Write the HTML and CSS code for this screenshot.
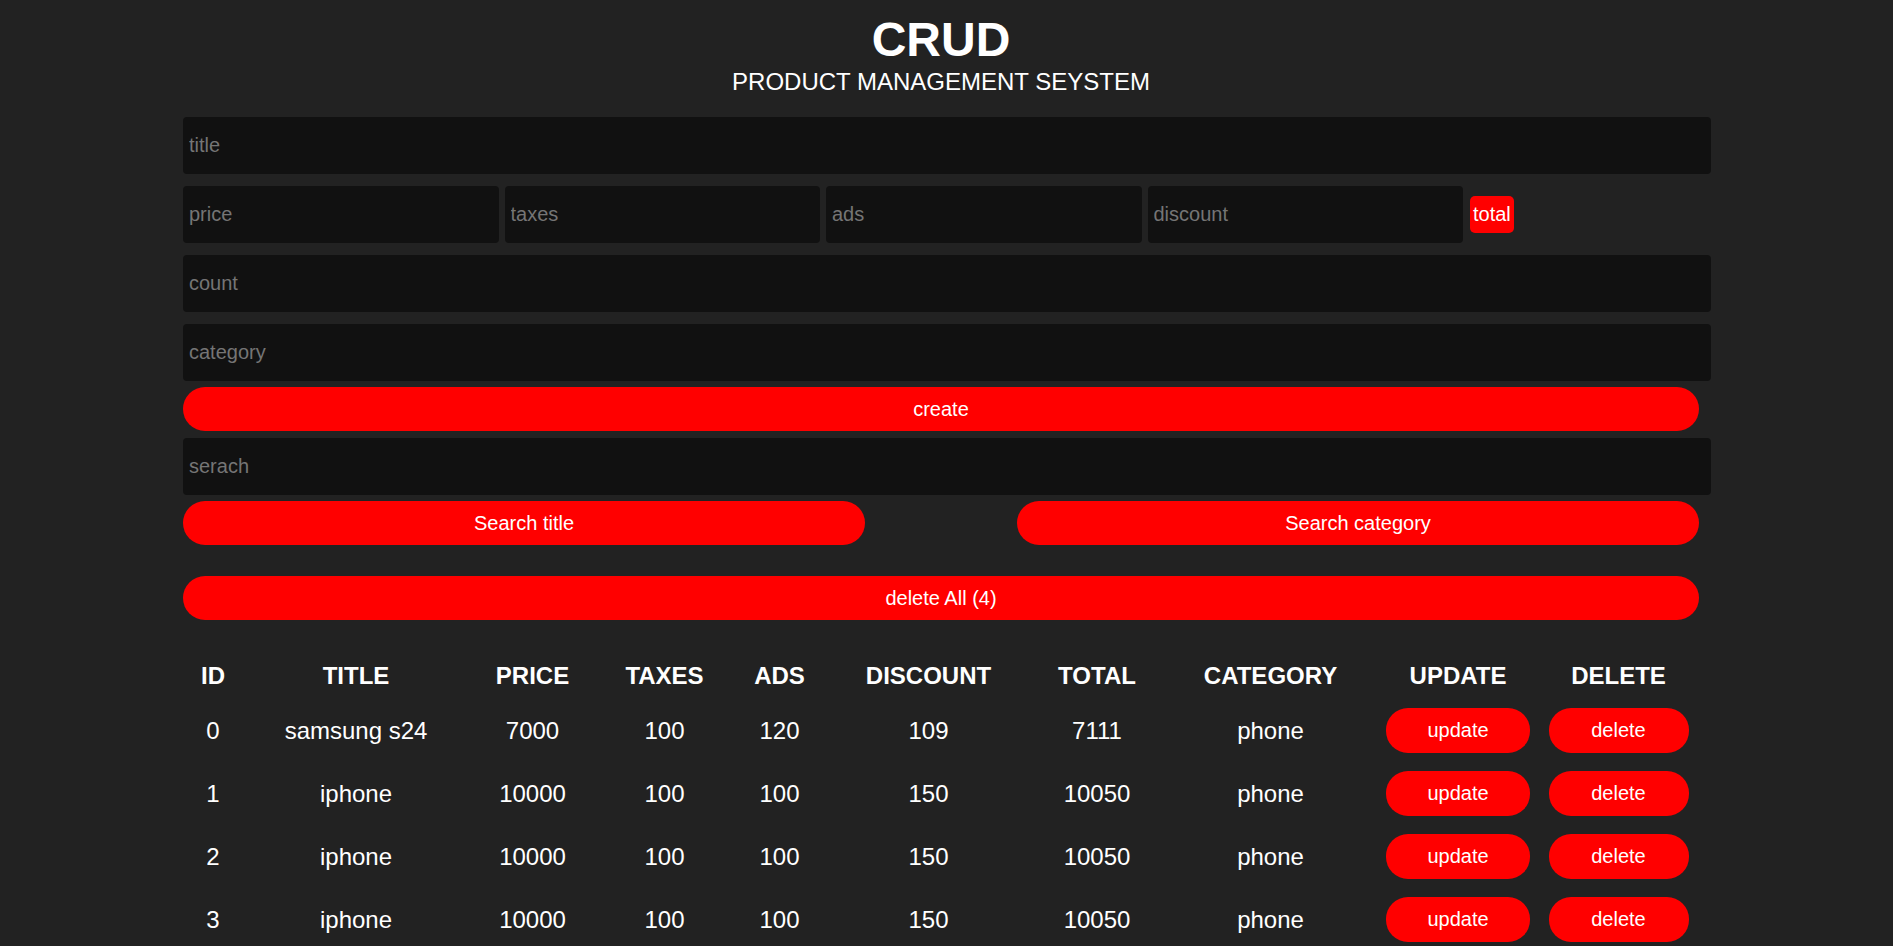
FILE: index.html
```
<!DOCTYPE html>
<html lang="en">
<head>
<meta charset="utf-8">
<title>CRUD</title>
<link rel="stylesheet" href="styles.css">
</head>
<body>
<div class="crud">
  <header class="head">
    <h1 class="head-title">CRUD</h1>
    <p class="head-sub">PRODUCT MANAGEMENT SEYSTEM</p>
  </header>

  <section class="form">
    <input class="field field-block" type="text" placeholder="title">
    <div class="price-row">
      <input class="field field-price" type="number" placeholder="price">
      <input class="field field-price" type="number" placeholder="taxes">
      <input class="field field-price" type="number" placeholder="ads">
      <input class="field field-price" type="number" placeholder="discount">
      <small class="total">total</small>
    </div>
    <input class="field field-block field-gap" type="number" placeholder="count">
    <input class="field field-block field-gap" type="text" placeholder="category">
    <button class="btn btn-create">create</button>
    <input class="field field-block field-search" type="text" placeholder="serach">
    <div class="search-btns">
      <button class="btn btn-half">Search title</button>
      <button class="btn btn-half">Search category</button>
    </div>
    <button class="btn btn-delete-all">delete All (4)</button>
  </section>

  <table class="products">
    <colgroup>
      <col class="c-id"><col class="c-title"><col class="c-price"><col class="c-taxes"><col class="c-ads">
      <col class="c-discount"><col class="c-total"><col class="c-category"><col class="c-update"><col class="c-delete">
    </colgroup>
    <thead>
      <tr>
        <th>id</th><th>title</th><th>price</th><th>taxes</th><th>ads</th>
        <th>discount</th><th>total</th><th>category</th><th>update</th><th>delete</th>
      </tr>
    </thead>
    <tbody>
      <tr>
        <td>0</td><td>samsung s24</td><td>7000</td><td>100</td><td>120</td><td>109</td><td>7111</td><td>phone</td>
        <td><button class="btn btn-row btn-update">update</button></td>
        <td><button class="btn btn-row btn-del">delete</button></td>
      </tr>
      <tr>
        <td>1</td><td>iphone</td><td>10000</td><td>100</td><td>100</td><td>150</td><td>10050</td><td>phone</td>
        <td><button class="btn btn-row btn-update">update</button></td>
        <td><button class="btn btn-row btn-del">delete</button></td>
      </tr>
      <tr>
        <td>2</td><td>iphone</td><td>10000</td><td>100</td><td>100</td><td>150</td><td>10050</td><td>phone</td>
        <td><button class="btn btn-row btn-update">update</button></td>
        <td><button class="btn btn-row btn-del">delete</button></td>
      </tr>
      <tr>
        <td>3</td><td>iphone</td><td>10000</td><td>100</td><td>100</td><td>150</td><td>10050</td><td>phone</td>
        <td><button class="btn btn-row btn-update">update</button></td>
        <td><button class="btn btn-row btn-del">delete</button></td>
      </tr>
    </tbody>
  </table>
</div>
</body>
</html>
```
FILE: styles.css
```
* {
  margin: 0;
  padding: 0;
  box-sizing: border-box;
}

html {
  background: #222222;
}

html::-webkit-scrollbar {
  width: 4px;
}
html::-webkit-scrollbar-track {
  background: #f1f1f1;
}
html::-webkit-scrollbar-thumb {
  background: #c1c1c1;
  border-top: 23px solid #f1f1f1;
  border-left: 1px solid #f1f1f1;
}

body {
  background: #222222;
  color: #ffffff;
  font-family: "Liberation Sans", Arial, sans-serif;
  padding-top: 12px;
  padding-bottom: 41px;
}

.crud {
  width: 1516px;
  margin-left: 183px;
}

.head {
  text-align: center;
}

.head-title {
  font-size: 48px;
  line-height: 56px;
  font-weight: 700;
}

.head-sub {
  font-size: 24px;
  line-height: 28px;
}

.form {
  display: flex;
  flex-direction: column;
  align-items: flex-start;
  margin-top: 21px;
}

.field {
  display: block;
  box-sizing: content-box;
  height: 57px;
  padding: 0 6px;
  border: none;
  outline: none;
  border-radius: 4px;
  background: #111111;
  color: #ffffff;
  font-family: "Liberation Sans", Arial, sans-serif;
  font-size: 20px;
  -moz-appearance: textfield;
}

.field-block {
  width: 100%;
}

.field::placeholder {
  color: #757575;
}

.field::-webkit-outer-spin-button,
.field::-webkit-inner-spin-button {
  -webkit-appearance: none;
  margin: 0;
}

.field-gap {
  margin-top: 12px;
}

.price-row {
  display: flex;
  align-items: center;
  gap: 6px;
  margin-top: 12px;
}

.field-price {
  width: 303.5px;
}

.total {
  margin-left: 1px;
  background: #ff0000;
  color: #ffffff;
  font-size: 20px;
  line-height: 23px;
  padding: 7px 3px;
  border-radius: 5px;
}

.btn {
  display: block;
  border: none;
  background: #ff0000;
  color: #ffffff;
  font-family: "Liberation Sans", Arial, sans-serif;
  font-size: 20px;
  height: 44px;
  border-radius: 22px;
  cursor: pointer;
}

.btn-create {
  width: 100%;
  margin-top: 6px;
}

.field-search {
  margin-top: 7px;
}

.search-btns {
  width: 100%;
  display: flex;
  justify-content: space-between;
  margin-top: 6px;
}

.btn-half {
  width: 682px;
}

.btn-delete-all {
  width: 100%;
  margin-top: 31px;
}

.products {
  width: 100%;
  margin-top: 32px;
  table-layout: fixed;
  border-collapse: collapse;
  text-align: center;
}

.c-id { width: 60px; }
.c-title { width: 226px; }
.c-price { width: 127px; }
.c-taxes { width: 137px; }
.c-ads { width: 93px; }
.c-discount { width: 205px; }
.c-total { width: 132px; }
.c-category { width: 215px; }
.c-update { width: 160px; }
.c-delete { width: 161px; }

.products th {
  height: 47px;
  padding: 0;
  font-size: 24px;
  font-weight: 700;
  text-transform: uppercase;
  vertical-align: middle;
}

.products td {
  height: 63px;
  padding: 0;
  font-size: 24px;
  vertical-align: middle;
}

.btn-row {
  height: 45px;
  margin: 0 auto;
}

.btn-update {
  width: 144px;
}

.btn-del {
  width: 140px;
}
```
